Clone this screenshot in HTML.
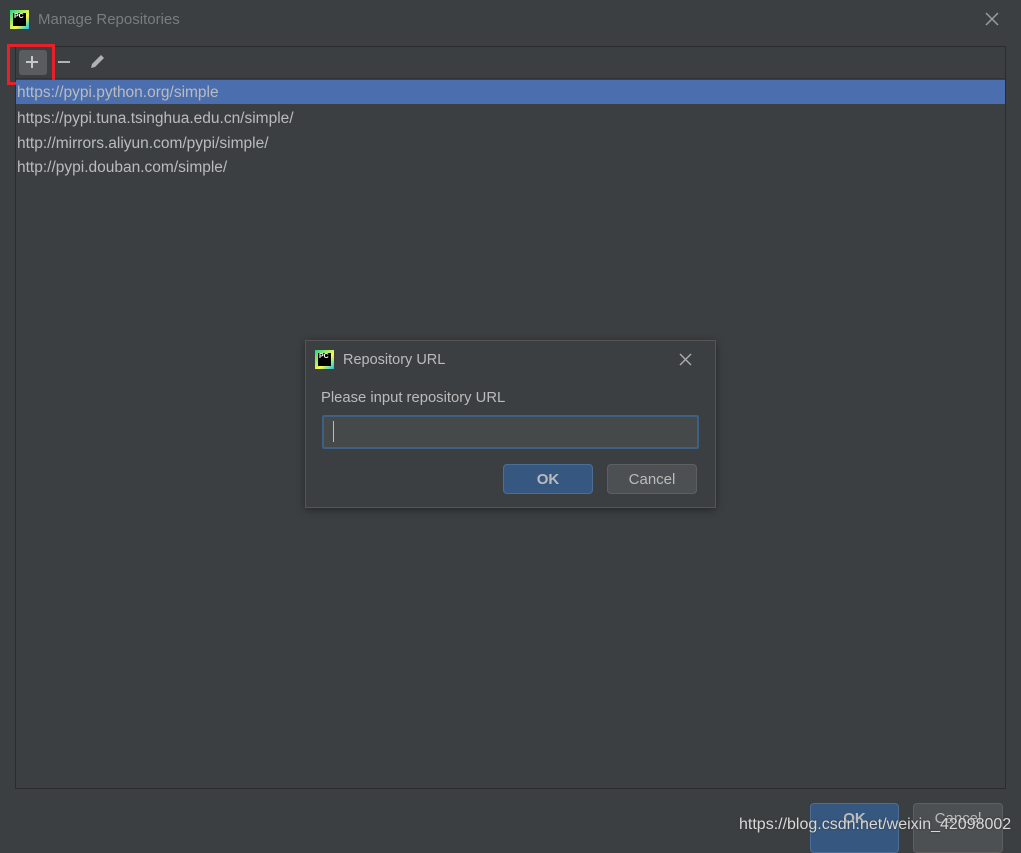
<!DOCTYPE html>
<html><head><style>
*{margin:0;padding:0;box-sizing:border-box}
body{width:1021px;height:846px;background:#3c3f41;font-family:"Liberation Sans",sans-serif;position:relative;overflow:hidden;color:#bbbbbb}
.a{position:absolute}
.logo{width:19px;height:19px;background:linear-gradient(135deg,#21d789,#fcf84a 60%,#07c3f2);}
.logo i{position:absolute;left:3px;top:3px;width:13px;height:13px;background:#000;color:#fff;font-size:7px;font-weight:bold;font-style:normal;line-height:8px;padding-left:1px}
.row{position:absolute;left:16px;width:989px;height:24px;font-size:15.5px;line-height:28px;padding-left:1px;color:#bbbbbb}
.btn{position:absolute;border-radius:4px;font-size:15px;text-align:center}
</style></head><body>
<div class="a logo" style="left:10px;top:10px"><i>PC</i></div>
<div class="a" style="left:38px;top:11px;font-size:15px;color:#7a7d80">Manage Repositories</div>
<svg class="a" style="left:985px;top:12px" width="14" height="14"><path d="M1 1L13 13M13 1L1 13" stroke="#9a9c9e" stroke-width="1.5"/></svg>
<div class="a" style="left:15px;top:46px;width:991px;height:743px;border:1px solid #2b2b2b"></div>
<div class="a" style="left:16px;top:78px;width:989px;height:1px;background:#323232"></div>
<div class="a" style="left:19px;top:50px;width:28px;height:25px;background:#5a5d60;border-radius:3px"></div>
<div class="a" style="left:7px;top:44px;width:48px;height:41px;border:3px solid #e8202a"></div>
<svg class="a" style="left:25px;top:55px" width="14" height="14"><path d="M7 1V13M1 7H13" stroke="#c8c8c8" stroke-width="2"/></svg>
<svg class="a" style="left:57px;top:55px" width="14" height="14"><path d="M1 7H13" stroke="#afb1b3" stroke-width="2"/></svg>
<svg class="a" style="left:88px;top:53px" width="18" height="18"><path d="M3 15L4 11L13 2L16 5L7 14Z" fill="#afb1b3"/></svg>
<div class="row" style="top:80px;background:#4b6eaf;line-height:26px">https://pypi.python.org/simple</div>
<div class="row" style="top:105px">https://pypi.tuna.tsinghua.edu.cn/simple/</div>
<div class="row" style="top:130px">http://mirrors.aliyun.com/pypi/simple/</div>
<div class="row" style="top:154px">http://pypi.douban.com/simple/</div>

<div class="a" style="left:305px;top:340px;width:411px;height:168px;border:1px solid #555;background:#3c3f41;box-shadow:0 2px 8px rgba(0,0,0,.4)">
<div class="a logo" style="left:9px;top:9px"><i>PC</i></div>
<div class="a" style="left:37px;top:11px;font-size:14.5px">Repository URL</div>
<svg class="a" style="left:373px;top:12px" width="13" height="13"><path d="M1 1L12 12M12 1L1 12" stroke="#aaa" stroke-width="1.5"/></svg>
<div class="a" style="left:15px;top:49px;font-size:14.8px">Please input repository URL</div>
<div class="a" style="left:16px;top:74px;width:377px;height:34px;border:2px solid #3d6185;border-radius:2px;background:#45494a"></div>
<div class="a" style="left:27px;top:80px;width:1px;height:21px;background:#bbb"></div>
<div class="btn" style="left:197px;top:123px;width:90px;height:30px;background:#365880;border:1px solid #4c6e94;line-height:30px;font-weight:bold">OK</div>
<div class="btn" style="left:301px;top:123px;width:90px;height:30px;background:#4c5052;border:1px solid #5e6060;line-height:30px">Cancel</div>
</div>

<div class="btn" style="left:810px;top:803px;width:89px;height:50px;background:#365880;border:1px solid #4c6e94;line-height:30px;font-weight:bold">OK</div>
<div class="btn" style="left:913px;top:803px;width:90px;height:50px;background:#4c5052;border:1px solid #5e6060;line-height:30px">Cancel</div>
<div class="a" style="left:739px;top:816px;font-size:16px;color:#d8d8d8;text-shadow:0 0 2px #333">https://blog.csdn.net/weixin_42098002</div>
</body></html>
